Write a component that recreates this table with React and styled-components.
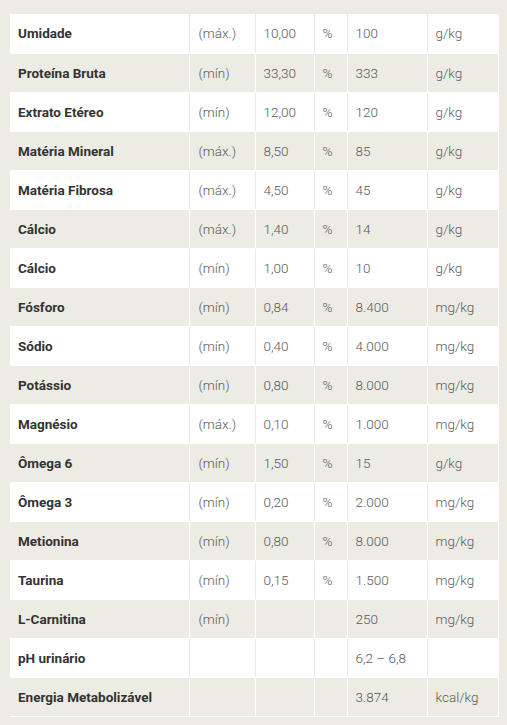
import React from 'react';
import styled, { createGlobalStyle } from 'styled-components';

const GlobalStyle = createGlobalStyle`
    html, body {
        margin: 0;
        padding: 0;
        background: #ecebe4;
    }
    body {
        font-family: Roboto, 'Liberation Sans', sans-serif;
    }
`;

const rows = [
    ['Umidade', '(máx.)', '10,00', '%', '100', 'g/kg'],
    ['Proteína Bruta', '(mín)', '33,30', '%', '333', 'g/kg'],
    ['Extrato Etéreo', '(mín)', '12,00', '%', '120', 'g/kg'],
    ['Matéria Mineral', '(máx.)', '8,50', '%', '85', 'g/kg'],
    ['Matéria Fibrosa', '(máx.)', '4,50', '%', '45', 'g/kg'],
    ['Cálcio', '(máx.)', '1,40', '%', '14', 'g/kg'],
    ['Cálcio', '(mín)', '1,00', '%', '10', 'g/kg'],
    ['Fósforo', '(mín)', '0,84', '%', '8.400', 'mg/kg'],
    ['Sódio', '(mín)', '0,40', '%', '4.000', 'mg/kg'],
    ['Potássio', '(mín)', '0,80', '%', '8.000', 'mg/kg'],
    ['Magnésio', '(máx.)', '0,10', '%', '1.000', 'mg/kg'],
    ['Ômega 6', '(mín)', '1,50', '%', '15', 'g/kg'],
    ['Ômega 3', '(mín)', '0,20', '%', '2.000', 'mg/kg'],
    ['Metionina', '(mín)', '0,80', '%', '8.000', 'mg/kg'],
    ['Taurina', '(mín)', '0,15', '%', '1.500', 'mg/kg'],
    ['L-Carnitina', '(mín)', '', '', '250', 'mg/kg'],
    ['pH urinário', '', '', '', '6,2 – 6,8', ''],
    ['Energia Metabolizável', '', '', '', '3.874', 'kcal/kg'],
];

const widths = [179, 66, 59, 33, 80, 71];

const App = () => (
    <Page>
        <GlobalStyle />
        <Table>
            <colgroup>
                {widths.map((w, i) => <col key={i} width={w} />)}
            </colgroup>
            <tbody>
                {rows.map((row, r) => (
                    <Row key={r} $shaded={r % 2 === 1}>
                        <Label>{row[0]}</Label>
                        {row.slice(1).map((cell, c) => (
                            <Cell key={c} $indent={c === 0 ? 9 : 8}>{cell}</Cell>
                        ))}
                    </Row>
                ))}
            </tbody>
        </Table>
    </Page>
);

const Page = styled.div`
    padding: 14px 9px 8px 10px;
`;

const Table = styled.table`
    width: 488px;
    border-collapse: collapse;
    table-layout: fixed;
`;

const Row = styled.tr`
    height: 39px;
    background: ${props => (props.$shaded ? '#ecebe4' : '#fff')};
    td {
        border: none;
        border-right: 1px solid ${props => (props.$shaded ? '#fff' : '#ebeae4')};
        border-bottom: 1px solid #fff;
        vertical-align: middle;
        font-size: 13.5px;
        white-space: nowrap;
    }
    td:last-child {
        border-right: 1px solid #fff;
    }
`;

const Label = styled.td`
    padding: 0 0 0 8px;
    font-weight: 700;
    color: #333;
`;

const Cell = styled.td`
    padding: 0 0 0 ${props => props.$indent}px;
    font-weight: 300;
    color: #5a5a5a;
`;

export default App;
